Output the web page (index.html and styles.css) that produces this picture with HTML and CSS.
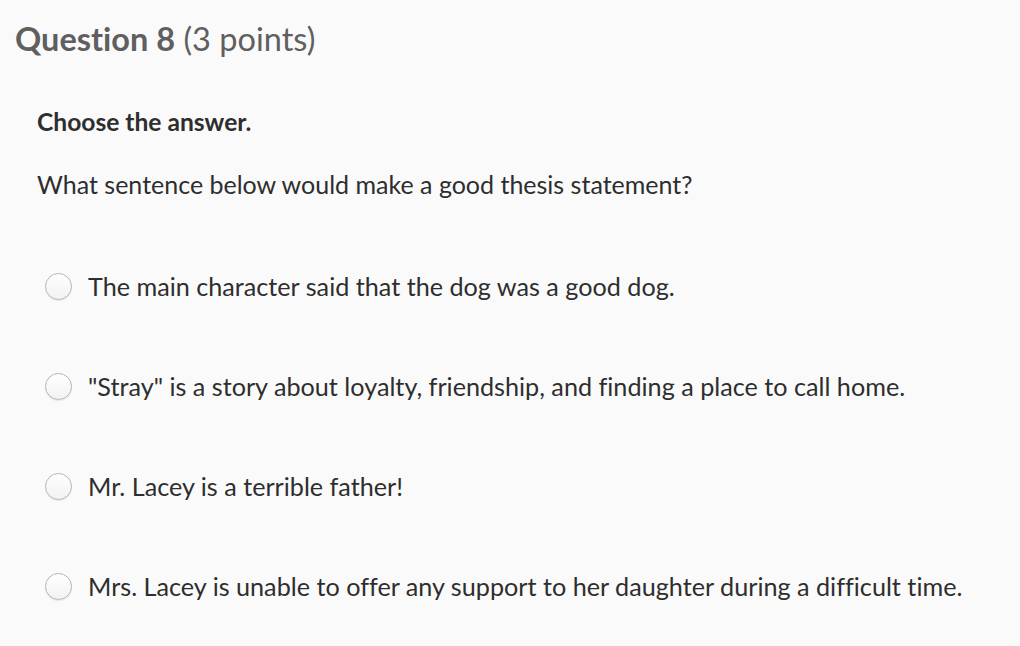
FILE: index.html
```html
<!DOCTYPE html>
<html>
<head>
<meta charset="utf-8">
<link rel="stylesheet" href="styles.css">
</head>
<body>
<div class="page">
  <h1 class="title"><span class="title-strong">Question 8</span> (3 points)</h1>
  <div class="content">
    <p class="instruction">Choose the answer.</p>
    <p class="prompt">What sentence below would make a good thesis statement?</p>
    <ul class="options">
      <li class="option"><span class="radio"></span><span class="label">The main character said that the dog was a good dog.</span></li>
      <li class="option"><span class="radio"></span><span class="label">"Stray" is a story about loyalty, friendship, and finding a place to call home.</span></li>
      <li class="option"><span class="radio"></span><span class="label">Mr. Lacey is a terrible father!</span></li>
      <li class="option"><span class="radio"></span><span class="label">Mrs. Lacey is unable to offer any support to her daughter during a difficult time.</span></li>
    </ul>
  </div>
</div>
</body>
</html>
```
FILE: styles.css
```css
html, body {
  margin: 0;
  padding: 0;
  background: #fafafa;
}
body {
  font-family: "Lato", "Open Sans", sans-serif;
  font-variant-ligatures: none;
  color: #2e2e2e;
  width: 1020px;
  height: 646px;
  overflow: hidden;
}
.page {
  padding-top: 19px;
}
.title {
  margin: 0;
  padding-left: 15px;
  font-size: 32.5px;
  line-height: 40px;
  font-weight: normal;
  color: #5f5f5f;
}
.title-strong {
  font-weight: bold;
}
.content {
  padding-left: 37px;
}
.instruction {
  margin: 48px 0 0 0;
  font-size: 24.6px;
  line-height: 30px;
  font-weight: bold;
  color: #2e2e2e;
}
.prompt {
  margin: 32px 0 0 0;
  font-size: 25px;
  line-height: 30px;
}
.options {
  list-style: none;
  margin: 72px 0 0 0;
  padding: 0 0 0 8px;
  display: flex;
  flex-direction: column;
  gap: 70px;
}
.option {
  display: flex;
  align-items: center;
  gap: 16px;
  height: 30px;
  font-size: 25.2px;
  line-height: 30px;
}
.radio {
  flex: none;
  width: 25px;
  height: 25px;
  border-radius: 50%;
  border: 1px solid #b5b5b5;
  background: linear-gradient(#ffffff, #f2f2f2);
  box-shadow: 0 1px 1px rgba(0, 0, 0, 0.08);
}
.label {
  white-space: nowrap;
}
```
